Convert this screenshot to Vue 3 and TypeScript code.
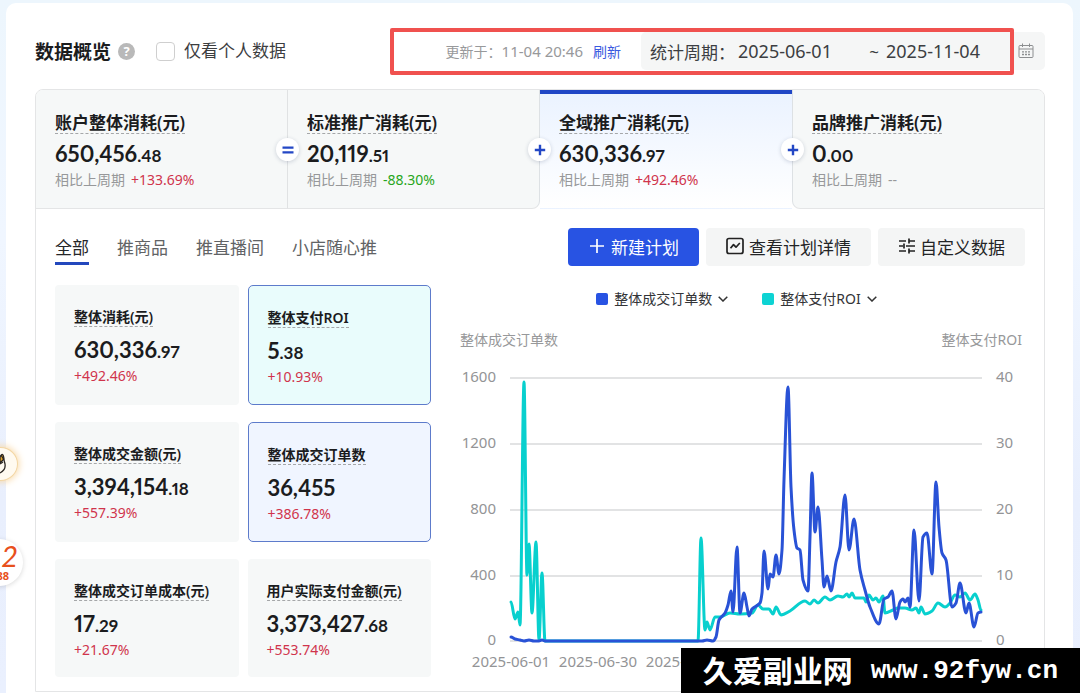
<script setup lang="ts">
import { ref } from 'vue'

interface Spend {
  title: string
  whole: string
  cents: string
  change: string
  trend: 'up' | 'down' | 'none'
  joint?: 'equal' | 'plus'
}

interface Metric {
  title: string
  whole: string
  cents: string
  change: string
  tone?: 'cyan' | 'blue'
}

type Point = [number, number]

const spends: Spend[] = [
  { title: '账户整体消耗(元)', whole: '650,456', cents: '.48', change: '+133.69%', trend: 'up', joint: 'equal' },
  { title: '标准推广消耗(元)', whole: '20,119', cents: '.51', change: '-88.30%', trend: 'down', joint: 'plus' },
  { title: '全域推广消耗(元)', whole: '630,336', cents: '.97', change: '+492.46%', trend: 'up', joint: 'plus' },
  { title: '品牌推广消耗(元)', whole: '0', cents: '.00', change: '--', trend: 'none' },
]
const activeSpend = ref(2)

const scopes = ['全部', '推商品', '推直播间', '小店随心推']
const activeScope = ref(0)

const metrics: Metric[] = [
  { title: '整体消耗(元)', whole: '630,336', cents: '.97', change: '+492.46%' },
  { title: '整体支付ROI', whole: '5', cents: '.38', change: '+10.93%', tone: 'cyan' },
  { title: '整体成交金额(元)', whole: '3,394,154', cents: '.18', change: '+557.39%' },
  { title: '整体成交订单数', whole: '36,455', cents: '', change: '+386.78%', tone: 'blue' },
  { title: '整体成交订单成本(元)', whole: '17', cents: '.29', change: '+21.67%' },
  { title: '用户实际支付金额(元)', whole: '3,373,427', cents: '.68', change: '+553.74%' },
]

const onlyMine = ref(false)
const startDate = ref('2025-06-01')
const endDate = ref('2025-11-04')

const gridRows = [
  { y: 0, left: '1600', right: '40' },
  { y: 66, left: '1200', right: '30' },
  { y: 132, left: '800', right: '20' },
  { y: 198, left: '400', right: '10' },
  { y: 263, left: '0', right: '0' },
]
const dates = [
  { x: 1, label: '2025-06-01' },
  { x: 88, label: '2025-06-30' },
  { x: 175, label: '2025-07-29' },
]

const roi: Point[] = [
  [1, 224], [5, 241], [8, 234], [10, 247], [14, 4], [17, 197], [19, 166], [22, 235], [26, 164], [29, 262],
  [32, 195], [35, 263], [188, 263], [191, 160], [195, 252], [197, 244], [200, 252], [205, 239], [210, 239],
  [220, 235], [230, 236], [242, 235], [248, 227], [253, 231], [259, 231], [263, 236], [266, 229], [271, 237],
  [280, 233], [295, 223], [300, 226], [304, 222], [308, 225], [315, 219], [320, 222], [328, 218], [333, 219],
  [337, 216], [339, 219], [342, 215], [345, 220], [350, 220], [354, 220], [356, 224], [359, 217], [363, 222],
  [366, 220], [369, 224], [373, 218], [375, 235], [383, 232], [388, 230], [395, 230], [402, 232], [406, 230],
  [409, 235], [411, 229], [415, 236], [422, 233], [428, 225], [435, 229], [440, 225], [445, 217], [450, 219],
  [455, 215], [460, 222], [465, 216], [468, 222], [471, 232],
]
const orders: Point[] = [
  [1, 259], [5, 261], [10, 262], [14, 263], [19, 262], [24, 263], [29, 263], [32, 262], [35, 263], [192, 263],
  [197, 262], [203, 263], [206, 259], [209, 242], [215, 235], [218, 227], [221, 213], [223, 234], [227, 169],
  [230, 235], [234, 215], [237, 229], [239, 238], [242, 231], [250, 225], [252, 215], [254, 173], [258, 211],
  [260, 196], [263, 199], [266, 177], [269, 196], [272, 172], [274, 102], [278, 9], [281, 109], [284, 152],
  [287, 170], [290, 172], [293, 202], [298, 213], [300, 159], [302, 95], [305, 154], [308, 129], [312, 182],
  [314, 209], [317, 198], [321, 213], [326, 184], [330, 169], [335, 117], [339, 172], [344, 141], [350, 192],
  [355, 212], [360, 229], [369, 246], [374, 221], [378, 219], [382, 213], [386, 241], [390, 224], [393, 221],
  [395, 224], [398, 220], [400, 229], [404, 152], [409, 223], [413, 159], [417, 155], [422, 196], [426, 104],
  [429, 149], [432, 175], [436, 182], [442, 229], [446, 225], [450, 205], [456, 235], [459, 225], [464, 249],
  [468, 235], [471, 234],
]

// Monotone cubic curve: peaks keep their height and flat runs stay flat.
function smooth(points: Point[]): string {
  const n = points.length
  const slopes: number[] = []
  for (let i = 0; i < n - 1; i++) {
    slopes.push((points[i + 1][1] - points[i][1]) / (points[i + 1][0] - points[i][0]))
  }
  const tangents = points.map((_, i) => {
    if (i === 0 || i === n - 1) return 0
    const a = slopes[i - 1]
    const b = slopes[i]
    return a * b <= 0 ? 0 : (2 * a * b) / (a + b)
  })
  let d = `M${points[0][0]} ${points[0][1]}`
  for (let i = 0; i < n - 1; i++) {
    const [x0, y0] = points[i]
    const [x1, y1] = points[i + 1]
    const h = (x1 - x0) / 3
    d += ` C${x0 + h} ${y0 + tangents[i] * h} ${x1 - h} ${y1 - tangents[i + 1] * h} ${x1} ${y1}`
  }
  return d
}

const roiPath = smooth(roi)
const ordersPath = smooth(orders)
</script>

<template>
  <div class="page">
    <main class="panel">
      <header class="head">
        <h1>数据概览</h1>
        <button class="help" type="button" aria-label="说明">?</button>
        <label class="mine"><input v-model="onlyMine" type="checkbox" />仅看个人数据</label>
        <div class="period-group">
          <span class="updated">更新于：<span class="time">11-04 20:46</span></span>
          <a class="refresh" href="#">刷新</a>
          <div class="period">
            <span class="period-label">统计周期：</span>
            <input v-model="startDate" type="text" aria-label="开始日期" />
            <span class="tilde">~</span>
            <input v-model="endDate" type="text" aria-label="结束日期" />
            <button class="calendar" type="button" aria-label="选择日期">
              <svg viewBox="0 0 16 16" width="16" height="16" fill="none" stroke="#8c8e90">
                <rect x="1" y="2.5" width="14" height="12" rx="1" />
                <path d="M1 6h14M4.5 .5v3.5M11.5 .5v3.5" />
                <path d="M4 8.8h2M7 8.8h2M10 8.8h2M4 11.5h2M7 11.5h2M10 11.5h2" stroke-width="1.3" />
              </svg>
            </button>
          </div>
          <div class="highlight"></div>
        </div>
      </header>

      <section class="board">
        <div class="spends">
          <button
            v-for="(s, i) in spends"
            :key="s.title"
            type="button"
            class="spend"
            :class="{ active: i === activeSpend, before: i === activeSpend - 1, after: i === activeSpend + 1 }"
            @click="activeSpend = i"
          >
            <span class="spend-title">{{ s.title }}</span>
            <span class="amount">{{ s.whole }}<small>{{ s.cents }}</small></span>
            <span class="compare">相比上周期<span :class="s.trend">{{ s.change }}</span></span>
            <span v-if="s.joint" class="joint">
              <svg viewBox="0 0 12 12" width="12" height="12" stroke="#2347c5" stroke-width="2.4">
                <path v-if="s.joint === 'equal'" d="M.5 3.6h11M.5 8.4h11" />
                <path v-else d="M.8 6h10.4M6 .8v10.4" />
              </svg>
            </span>
          </button>
        </div>

        <div class="toolbar">
          <nav class="scopes">
            <button
              v-for="(s, i) in scopes"
              :key="s"
              type="button"
              :class="{ current: i === activeScope }"
              @click="activeScope = i"
            >{{ s }}</button>
          </nav>
          <div class="actions">
            <button class="primary" type="button">
              <svg viewBox="0 0 14 14" width="14" height="14" stroke="#fff" stroke-width="1.7"><path d="M0 7h14M7 0v14" /></svg>
              新建计划
            </button>
            <button class="detail" type="button">
              <svg viewBox="0 0 18 18" width="18" height="18" fill="none" stroke="#222" stroke-width="1.7" stroke-linejoin="round">
                <rect x="1" y="1.5" width="16" height="15" rx="2" />
                <path d="M4.5 11.2l3-3.6 2.5 2.6 3.8-4.2" />
              </svg>
              查看计划详情
            </button>
            <button class="custom" type="button">
              <svg viewBox="0 0 16 16" width="16" height="16" stroke="#222" stroke-width="1.7">
                <path d="M0 3h7M10 3h6M10 .6v4.800M0 8h4M7 8h9M5 5.600v4.800M0 13h7M10 13h6M10 10.600v4.800" />
              </svg>
              自定义数据
            </button>
          </div>
        </div>

        <div class="content">
          <div class="metrics">
            <article v-for="m in metrics" :key="m.title" class="metric" :class="m.tone">
              <h2>{{ m.title }}</h2>
              <p class="amount">{{ m.whole }}<small>{{ m.cents }}</small></p>
              <p class="rate">{{ m.change }}</p>
            </article>
          </div>

          <div class="chart">
            <div class="legend">
              <button type="button">
                <i class="blue-key"></i>整体成交订单数
                <svg viewBox="0 0 10 6" width="10" height="6" fill="none" stroke="#333" stroke-width="1.5"><path d="M.7 .7l4.300 4.300L9.300 .7" /></svg>
              </button>
              <button type="button">
                <i class="cyan-key"></i>整体支付ROI
                <svg viewBox="0 0 10 6" width="10" height="6" fill="none" stroke="#333" stroke-width="1.5"><path d="M.7 .7l4.300 4.300L9.300 .7" /></svg>
              </button>
            </div>
            <div class="axis-names"><span>整体成交订单数</span><span>整体支付ROI</span></div>
            <svg class="plot" viewBox="-58 -18 573 314" role="img" aria-label="整体成交订单数与整体支付ROI趋势">
              <g v-for="r in gridRows" :key="r.left">
                <path class="grid-line" :d="`M0 ${r.y}H472`" />
                <text :x="-14" :y="r.y + 4" text-anchor="end">{{ r.left }}</text>
                <text :x="486" :y="r.y + 4">{{ r.right }}</text>
              </g>
              <text v-for="d in dates" :key="d.label" :x="d.x" y="289" text-anchor="middle">{{ d.label }}</text>
              <path class="line roi" :d="roiPath" />
              <path class="line orders" :d="ordersPath" />
            </svg>
          </div>
        </div>
      </section>
    </main>

    <button class="bubble assistant" type="button" aria-label="助手">
      <svg viewBox="0 0 8 24" width="8" height="24" fill="none" stroke="#2b2622" stroke-width="1.3">
        <path d="M0 5Q3-1 4 7L0 11Z" fill="#e9a829" />
        <path d="M1 3L4 8 5 12Q6 18 0 21M0 12L3 10" />
      </svg>
    </button>
    <button class="bubble promo" type="button"><em>2</em><b>88</b></button>

    <footer class="mark"><span>久爱副业网</span><span class="site">www.92fyw.cn</span></footer>
  </div>
</template>

<style>
body {
  margin: 0;
}
</style>

<style scoped>
.page {
  position: relative;
  box-sizing: border-box;
  height: 100vh;
  overflow: hidden;
  padding: 3px 7px 0 6px;
  background: linear-gradient(180deg, #edf6fd 0, #f0f6ff 240px, #e9effd 500px, #eaf0fe 100%);
  color: #1b1c1e;
  font-family: 'Noto Sans', 'Noto Sans CJK SC', sans-serif;
  font-size: 14px;
}
button {
  margin: 0;
  padding: 0;
  border: 0;
  background: none;
  color: inherit;
  font: inherit;
  cursor: pointer;
}
h1,
h2,
p {
  margin: 0;
}
.panel {
  box-sizing: border-box;
  min-height: 100%;
  padding: 29px 28px 0 29px;
  border-radius: 10px 10px 0 0;
  background: #fff;
}
.head {
  display: flex;
  align-items: center;
  height: 38px;
  margin-bottom: 19px;
}
h1 {
  font-size: 19px;
  font-weight: 700;
}
.help {
  width: 17px;
  height: 17px;
  margin: 0 21px 0 7px;
  border-radius: 50%;
  background: #b9b9b9;
  color: #fff;
  font-size: 13px;
  font-weight: 700;
  line-height: 17px;
}
.mine {
  display: flex;
  align-items: center;
  gap: 9px;
  color: #3c3d3f;
  font-size: 17px;
  line-height: 22px;
}
.mine input {
  appearance: none;
  width: 19px;
  height: 19px;
  margin: 0;
  border: 1px solid #cfcfcf;
  border-radius: 4px;
  background: #fff;
}
.mine input:checked {
  background: #2853e0;
}
.period-group {
  position: relative;
  display: flex;
  align-items: center;
  margin-left: auto;
}
.updated {
  color: #98999b;
}
.time {
  font-size: 15px;
}
.refresh {
  margin: 0 20px 0 10px;
  color: #3a5ae0;
  text-decoration: none;
}
.period {
  display: flex;
  align-items: center;
  box-sizing: border-box;
  width: 404px;
  height: 38px;
  padding: 0 11px 0 9px;
  border-radius: 5px;
  background: #f5f6f6;
  color: #3c3e42;
  font-size: 17px;
}
.period input {
  width: 98px;
  padding: 0;
  border: 0;
  outline: 0;
  background: none;
  color: inherit;
  font-family: inherit;
  font-size: 18px;
}
.period-label {
  margin-right: 3px;
}
.tilde {
  margin: 0 7px 0 auto;
}
.calendar {
  display: flex;
  margin-left: 34px;
}
.highlight {
  position: absolute;
  inset: -4px 31px -5px -56px;
  border: 4px solid #f0514f;
  border-radius: 2px;
  pointer-events: none;
}
.board {
  border: 1px solid #e4e5e6;
  border-radius: 8px 8px 0 0;
}
.spends {
  display: grid;
  grid-template-columns: repeat(4, 1fr);
  border-radius: 7px 7px 0 0;
}
.spend {
  position: relative;
  display: flex;
  flex-direction: column;
  align-items: flex-start;
  padding: 22px 19px 18px;
  border-bottom: 1px solid #e4e5e6;
  background: #f6f8f8;
  text-align: left;
}
.spend:first-child {
  border-right: 1px solid #e0e2e3;
  border-top-left-radius: 7px;
}
.spend:last-child {
  border-top-right-radius: 7px;
}
.spend.before {
  border-right: 1px solid #dde1e4;
  border-bottom-right-radius: 8px;
}
.spend.after {
  border-left: 1px solid #dde1e4;
  border-bottom-left-radius: 8px;
}
.spend.active {
  border-bottom-color: transparent;
  background: linear-gradient(180deg, #eaf2ff 0, #fff 100%);
}
.spend.active::before {
  position: absolute;
  top: 0;
  right: 0;
  left: 0;
  height: 4px;
  background: #1f46c6;
  content: '';
}
.spend-title {
  border-bottom: 1px dashed #a5a7a9;
  font-size: 17px;
  font-weight: 600;
  line-height: 21px;
}
.amount {
  font-family: Lato, 'Noto Sans', sans-serif;
  font-size: 22px;
  font-variant-numeric: proportional-nums;
  font-weight: 700;
  line-height: 28px;
}
.amount small {
  font-size: 17px;
}
.spend .amount {
  margin: 6px 0 0;
}
.compare {
  color: #97989a;
  line-height: 20px;
}
.compare span {
  margin-left: 6px;
}
.up,
.rate {
  color: #d0344c;
}
.down {
  color: #27a620;
}
.joint {
  position: absolute;
  z-index: 1;
  top: 48px;
  right: -12px;
  display: flex;
  align-items: center;
  justify-content: center;
  width: 23px;
  height: 23px;
  border-radius: 50%;
  background: #fff;
  box-shadow: 0 1px 4px rgba(30, 50, 90, 0.2);
}
.toolbar {
  display: flex;
  align-items: center;
  justify-content: space-between;
  padding: 19px 19px 0;
}
.scopes {
  display: flex;
  gap: 28px;
}
.scopes button {
  padding: 7px 0 2px;
  border-bottom: 3px solid transparent;
  color: #616365;
  font-size: 17px;
  line-height: 24px;
}
.scopes .current {
  border-color: #2348bd;
  color: #252628;
}
.actions {
  display: flex;
  gap: 7px;
}
.actions button {
  display: flex;
  align-items: center;
  justify-content: center;
  gap: 5px;
  height: 38px;
  padding: 0 20px 2px;
  border-radius: 4px;
  background: #f4f5f5;
  color: #232426;
  font-size: 17px;
}
.actions .primary {
  gap: 7px;
  padding: 0 20px 2px 22px;
  background: #2853e3;
  color: #fff;
}
.actions .custom {
  padding: 0 20px 2px 21px;
}
.content {
  display: grid;
  grid-template-columns: minmax(0, 376fr) minmax(0, 573fr);
  gap: 21px;
  padding: 19px 19px 14px;
}
.metrics {
  display: grid;
  grid-template-columns: repeat(2, minmax(0, 1fr));
  align-content: start;
  gap: 17px 9px;
}
.metric {
  padding: 22px 19px 17px;
  border-radius: 4px;
  background: #f6f8f8;
}
.metric.cyan,
.metric.blue {
  border: 1px solid #5d7bcb;
  border-radius: 5px;
  background: #e9fcfc;
}
.metric.blue {
  background: #f0f5ff;
}
.metric h2 {
  width: fit-content;
  border-bottom: 1px dashed #a5a7a9;
  font-size: 14px;
  font-weight: 600;
  line-height: 19px;
  white-space: nowrap;
}
.metric .amount {
  margin: 9px 0 0;
}
.rate {
  line-height: 20px;
}
.legend {
  display: flex;
  justify-content: center;
  gap: 34px;
  padding: 3px 4px 0 0;
}
.legend button {
  display: flex;
  align-items: center;
  gap: 6px;
  color: #333437;
  line-height: 22px;
}
.legend i {
  width: 12px;
  height: 12px;
  border-radius: 2px;
}
.blue-key {
  background: #2853e3;
}
.cyan-key {
  background: #0dd3d3;
}
.axis-names {
  display: flex;
  justify-content: space-between;
  margin-top: 19px;
  padding: 0 3px 0 8px;
  color: #97989a;
  line-height: 22px;
}
.plot {
  display: block;
  width: 100%;
  margin-top: 9px;
}
.plot text {
  fill: #939496;
  font-size: 15px;
}
.grid-line {
  stroke: #e2e3e4;
  stroke-width: 2;
}
.line {
  fill: none;
  stroke-linecap: round;
  stroke-linejoin: round;
  stroke-width: 3;
}
.roi {
  stroke: #08d0ce;
}
.orders {
  stroke: #2952d6;
}
.bubble {
  position: absolute;
  border-radius: 50%;
  background: #fff;
}
.assistant {
  top: 447px;
  left: -17px;
  width: 35px;
  height: 34px;
  border: 1px solid #f3d6a3;
  background: #fffaf0;
  box-shadow: 0 0 7px 1px #f8d9a8;
}
.assistant svg {
  display: block;
  margin: 0 0 0 16px;
}
.promo {
  top: 539px;
  left: -24px;
  width: 47px;
  height: 47px;
  box-shadow: 0 1px 5px rgba(0, 0, 0, 0.15);
  color: #e8501c;
}
.promo em,
.promo b {
  display: block;
  padding-right: 14px;
  text-align: right;
  font-size: 11px;
  line-height: 14px;
}
.promo em {
  padding-right: 5px;
  font-family: Lato, sans-serif;
  font-size: 29px;
  line-height: 26px;
}
.mark {
  position: absolute;
  right: 0;
  bottom: 0;
  display: flex;
  align-items: center;
  gap: 18px;
  box-sizing: border-box;
  height: 45px;
  padding: 0 22px 2px;
  background: #000;
  color: #fff;
  font-family: 'Noto Sans CJK SC', sans-serif;
  font-size: 30px;
  font-weight: 700;
  line-height: 41px;
}
.site {
  padding-top: 3px;
  font-family: 'Liberation Mono', monospace;
  font-size: 26px;
}
</style>
